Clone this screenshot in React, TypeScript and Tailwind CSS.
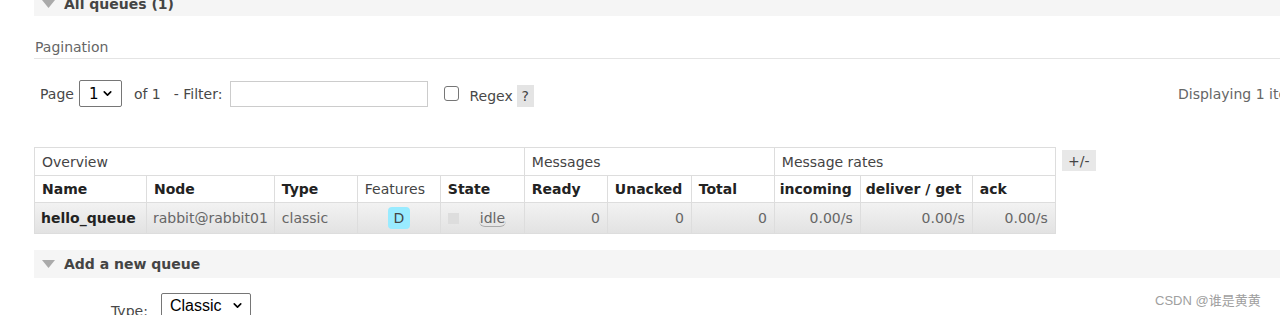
import { ChevronDown } from 'lucide-react';

const font = { fontFamily: '"DejaVu Sans", Verdana, sans-serif' };

// column widths taken from the queue table
const cols = [112, 127, 83, 83, 84, 83, 84, 83, 86, 112, 83];

function Triangle() {
  return (
    <svg width="13" height="8" viewBox="0 0 13 8" className="shrink-0">
      <polygon points="0,0 13,0 6.5,8" fill="#aaaaaa" />
    </svg>
  );
}

function SectionBar({ title, className }: { title: string; className?: string }) {
  return (
    <div className={`ml-[34px] flex items-center gap-[9px] bg-[#f5f5f5] pl-[8px] ${className ?? ''}`}>
      <Triangle />
      <span className="text-[14px] font-bold leading-[18px] text-[#444]">{title}</span>
    </div>
  );
}

const th = 'border border-[#dddddd] px-[7px] text-left font-bold text-[#222] h-[27px]';
const td = 'border border-[#dddddd] px-[7px] h-[31px] text-[#666]';
const grp = 'h-[28px] border border-[#dddddd] px-[7px] text-left font-normal text-[#444]';

export default function App() {
  return (
    <div className="relative h-[315px] w-[1280px] overflow-hidden bg-white text-[14px] leading-[18px] text-[#484848]" style={font}>
      <div className="-mt-[12px]">
        <SectionBar title="All queues (1)" className="h-[28px] pt-[4px]" />
      </div>

      <div className="ml-[34px] mt-[22px] border-b border-[#e4e4e4] pb-[2px] pl-[1px] text-[#666]">
        Pagination
      </div>

      <div className="mt-[21px] flex h-[27px] items-center pl-[40px]">
        <span>Page</span>
        <div className="ml-[5px] flex h-[27px] w-[43px] items-center justify-between rounded-[2px] border border-[#767676] pl-[9px] pr-[7px] text-[15px] text-black">
          <span>1</span>
          <ChevronDown size={13} strokeWidth={3} />
        </div>
        <span className="ml-[12px]">of 1</span>
        <span className="ml-[13px]">- Filter:</span>
        <div className="ml-[8px] h-[26px] w-[198px] border border-[#cccccc]" />
        <div className="ml-[16px] h-[15px] w-[15px] rounded-[3px] border border-[#767676]" />
        <span className="ml-[10px] mt-[5px]">Regex</span>
        <span className="ml-[4px] mt-[5px] flex h-[22px] w-[17px] items-center justify-center bg-[#e4e4e4] text-[#444]">?</span>
        <div className="ml-auto w-[102px] whitespace-nowrap text-[#666]">Displaying 1 item</div>
      </div>

      <div className="mt-[40px] flex items-start pl-[34px]">
        <table className="table-fixed border-collapse">
          <colgroup>
            {cols.map((w, i) => (
              <col key={i} style={{ width: w }} />
            ))}
          </colgroup>
          <thead>
            <tr>
              <th colSpan={5} className={grp}>Overview</th>
              <th colSpan={3} className={grp}>Messages</th>
              <th colSpan={3} className={grp}>Message rates</th>
            </tr>
            <tr>
              <th className={th}>Name</th>
              <th className={th}>Node</th>
              <th className={th}>Type</th>
              <th className={`${th} !font-normal !text-[#444]`}>Features</th>
              <th className={th}>State</th>
              <th className={th}>Ready</th>
              <th className={th}>Unacked</th>
              <th className={th}>Total</th>
              <th className={`${th} !px-[5px]`}>incoming</th>
              <th className={`${th} !px-[5px]`}>deliver / get</th>
              <th className={th}>ack</th>
            </tr>
          </thead>
          <tbody>
            <tr className="bg-gradient-to-b from-[#f2f2f2] to-[#e2e2e2]">
              <td className={`${td} !px-[6px] !font-bold !text-[#222]`}>hello_queue</td>
              <td className={`${td} !px-[6px]`}>rabbit@rabbit01</td>
              <td className={td}>classic</td>
              <td className={`${td} text-center`}>
                <span className="inline-flex h-[22px] w-[22px] items-center justify-center rounded-[4px] bg-[#99ebff] text-[#444]">D</span>
              </td>
              <td className={td}>
                <div className="flex items-center">
                  <span className="h-[11px] w-[11px] bg-[#dddddd]" />
                  <span className="ml-[20px] rounded-b-[6px] border-b border-[#aaaaaa] px-[1px] leading-[16px]">idle</span>
                </div>
              </td>
              <td className={`${td} text-right`}>0</td>
              <td className={`${td} text-right`}>0</td>
              <td className={`${td} text-right`}>0</td>
              <td className={`${td} text-right`}>0.00/s</td>
              <td className={`${td} text-right`}>0.00/s</td>
              <td className={`${td} text-right`}>0.00/s</td>
            </tr>
          </tbody>
        </table>
        <span className="ml-[6px] mt-[3px] flex h-[21px] w-[34px] items-center justify-center bg-[#e8e8e8] text-[#444]">+/-</span>
      </div>

      <SectionBar title="Add a new queue" className="mt-[16px] h-[28px]" />

      <div className="mt-[15px] flex items-start pl-[111px]">
        <span className="mt-[9px]">Type:</span>
        <div className="ml-[13px] flex h-[25px] w-[90px] items-center justify-between rounded-[2px] border border-[#767676] pl-[8px] pr-[6px] text-[16px] text-black" style={{ fontFamily: '"Liberation Sans", Arial, sans-serif' }}>
          <span>Classic</span>
          <ChevronDown size={13} strokeWidth={3} />
        </div>
      </div>

      <span className="absolute left-[1155px] top-[292px] text-[13px] text-[#a0a0a0]" style={{ fontFamily: '"Liberation Sans", "Noto Sans CJK SC", sans-serif' }}>
        CSDN @谁是黄黄
      </span>
    </div>
  );
}
